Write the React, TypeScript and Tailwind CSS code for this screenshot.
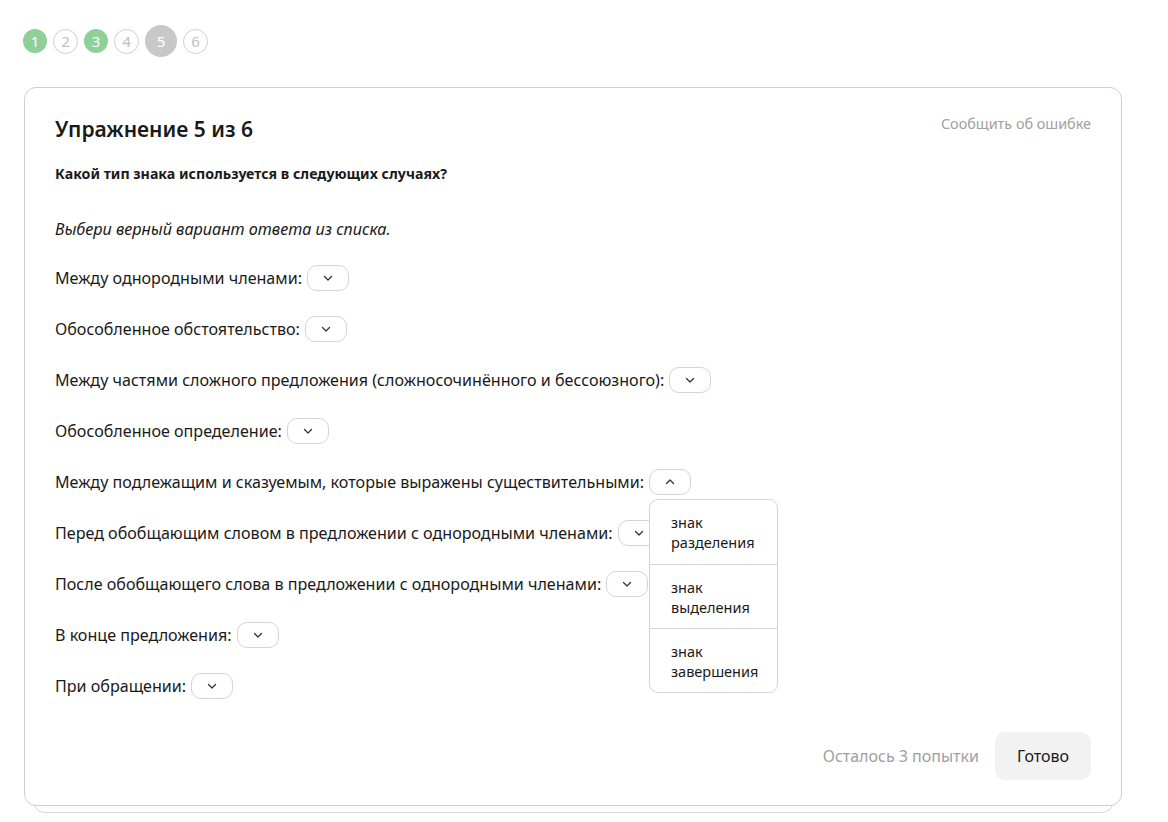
import React from "react";

const rows = [
  "Между однородными членами:",
  "Обособленное обстоятельство:",
  "Между частями сложного предложения (сложносочинённого и бессоюзного):",
  "Обособленное определение:",
  "Между подлежащим и сказуемым, которые выражены существительными:",
  "Перед обобщающим словом в предложении с однородными членами:",
  "После обобщающего слова в предложении с однородными членами:",
  "В конце предложения:",
  "При обращении:",
];

function Chevron({ up }: { up?: boolean }) {
  return (
    <svg width="12" height="12" viewBox="0 0 12 12" fill="none" stroke="#333" strokeWidth="1.3" strokeLinecap="round" strokeLinejoin="round">
      {up ? <path d="M2.5 7.5 L6 4 L9.5 7.5" /> : <path d="M2.5 4.5 L6 8 L9.5 4.5" />}
    </svg>
  );
}

export default function App() {
  const steps = [
    { n: 1, kind: "done" },
    { n: 2, kind: "empty" },
    { n: 3, kind: "done" },
    { n: 4, kind: "empty" },
    { n: 5, kind: "current" },
    { n: 6, kind: "empty" },
  ];
  return (
    <div className="min-h-[822px] bg-white text-[#1a1a1a]" style={{ fontFamily: '"Noto Sans", "Open Sans", sans-serif' }}>
      <div className="px-[23px] pt-[25px] flex items-center gap-[6px]">
        {steps.map((s) =>
          s.kind === "done" ? (
            <div key={s.n} className="w-[24px] h-[24px] rounded-full bg-[#8fcf98] text-white text-[15px] flex items-center justify-center">{s.n}</div>
          ) : s.kind === "current" ? (
            <div key={s.n} className="w-[32px] h-[32px] rounded-full bg-[#c8c8c8] text-white text-[15px] flex items-center justify-center">{s.n}</div>
          ) : (
            <div key={s.n} className="w-[25px] h-[25px] rounded-full border border-[#cfcfcf] text-[#c0c0c0] text-[15px] flex items-center justify-center">{s.n}</div>
          )
        )}
      </div>

      <div className="relative mx-[24px] mt-[30px] w-[1098px]">
        <div className="absolute left-[9px] right-[8px] -bottom-[7px] h-[20px] rounded-b-[12px] border border-[#d6d6d6] bg-white" />
        <div className="relative rounded-[12px] border border-[#cfcfcf] bg-white px-[30px] pt-[26px] pb-[25px] h-[719px] flex flex-col">
          <div className="flex items-start justify-between">
            <h1 className="text-[21px] font-semibold leading-[30px]">Упражнение 5 из 6</h1>
            <span className="text-[14.4px] text-[#a0a0a0] leading-[20px]">Сообщить об ошибке</span>
          </div>
          <p className="mt-[20px] text-[14.2px] font-bold leading-[20px]">Какой тип знака используется в следующих случаях?</p>
          <p className="mt-[32px] text-[16.2px] italic leading-[26px]">Выбери верный вариант ответа из списка.</p>
          <div className="mt-[23px] flex flex-col gap-[25px]">
            {rows.map((r, i) => (
              <div key={i} className="flex items-center gap-[5px] h-[26px] text-[16.1px]">
                <span>{r}</span>
                <div className="relative">
                  <button className="w-[42px] h-[26px] rounded-[10px] border border-[#d4d4d4] bg-white flex items-center justify-center">
                    <Chevron up={i === 4} />
                  </button>
                  {i === 4 && (
                    <div className="absolute left-0 top-[30px] z-10 w-[129px] rounded-[9px] border border-[#d4d4d4] bg-white">
                      {["разделения", "выделения", "завершения"].map((t, k) => (
                        <div key={t} className={`h-[64px] px-[21px] flex flex-col justify-center text-[14.5px] leading-[20px] ${k > 0 ? "border-t border-[#d4d4d4]" : ""}`}>
                          <span>знак</span>
                          <span>{t}</span>
                        </div>
                      ))}
                    </div>
                  )}
                </div>
              </div>
            ))}
          </div>
          <div className="mt-auto flex items-center justify-end gap-[16px]">
            <span className="text-[16px] text-[#a0a0a0]">Осталось 3 попытки</span>
            <button className="w-[96px] h-[48px] rounded-[10px] bg-[#f2f2f2] text-[16px]">Готово</button>
          </div>
        </div>
      </div>
    </div>
  );
}
